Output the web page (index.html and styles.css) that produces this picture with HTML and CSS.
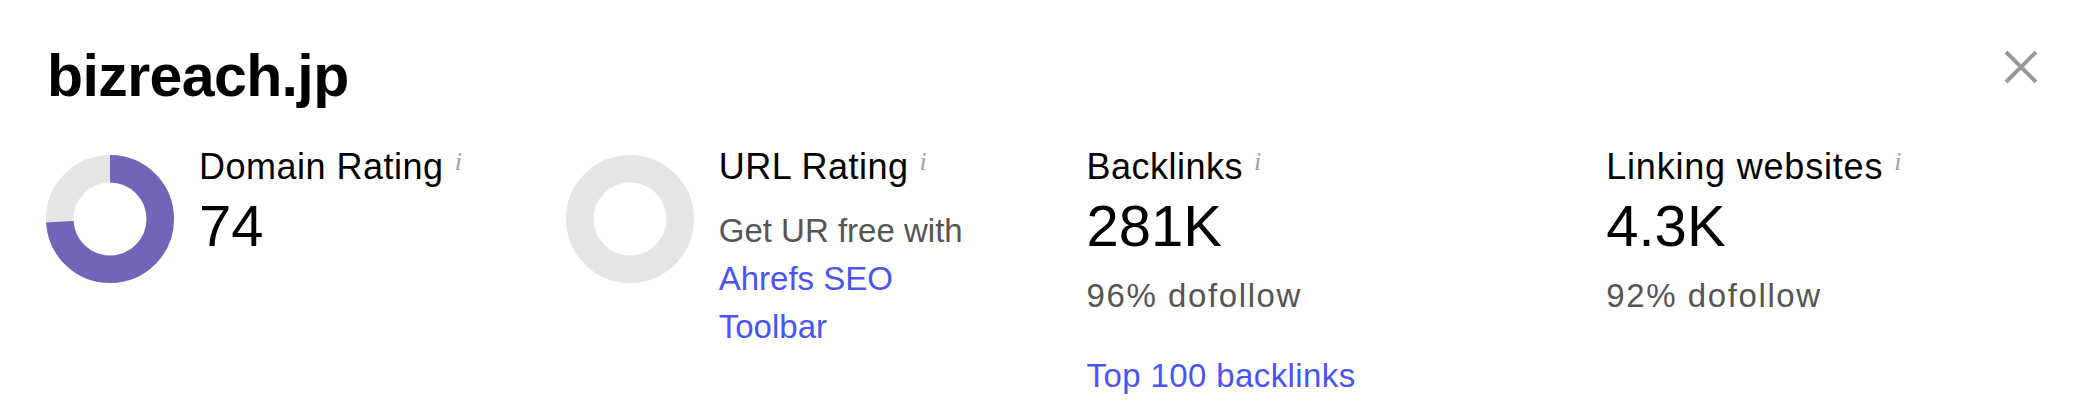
FILE: index.html
```html
<!DOCTYPE html>
<html lang="en">
<head>
<meta charset="utf-8">
<title>bizreach.jp</title>
<link rel="stylesheet" href="styles.css">
</head>
<body>
<div class="panel">
  <div class="header">
    <h1 class="title">bizreach.jp</h1>
    <button class="close" aria-label="Close">
      <svg width="34" height="34" viewBox="0 0 34 34"><path d="M2 2 L32 32 M32 2 L2 32" stroke="#999" stroke-width="4" fill="none"/></svg>
    </button>
  </div>
  <div class="stats">
    <div class="stat with-chart">
      <svg class="donut" width="128" height="128" viewBox="0 0 128 128">
        <circle cx="64" cy="64" r="50.25" fill="none" stroke="#e5e5e5" stroke-width="27.5"/>
        <circle cx="64" cy="64" r="50.25" fill="none" stroke="#7363b9" stroke-width="27.5" stroke-dasharray="233.6 400" transform="rotate(-90 64 64)"/>
      </svg>
      <div class="body">
        <div class="label">Domain Rating<span class="info">i</span></div>
        <div class="value">74</div>
      </div>
    </div>
    <div class="stat with-chart">
      <svg class="donut" width="128" height="128" viewBox="0 0 128 128">
        <circle cx="64" cy="64" r="50.25" fill="none" stroke="#e5e5e5" stroke-width="27.5"/>
      </svg>
      <div class="body">
        <div class="label">URL Rating<span class="info">i</span></div>
        <div class="promo">Get UR free with <a href="#" class="link">Ahrefs SEO Toolbar</a></div>
      </div>
    </div>
    <div class="stat">
      <div class="body">
        <div class="label">Backlinks<span class="info">i</span></div>
        <div class="value">281K</div>
        <div class="sub">96% dofollow</div>
        <a href="#" class="link top">Top 100 backlinks</a>
      </div>
    </div>
    <div class="stat">
      <div class="body">
        <div class="label wide">Linking websites<span class="info">i</span></div>
        <div class="value">4.3K</div>
        <div class="sub">92% dofollow</div>
      </div>
    </div>
  </div>
</div>
</body>
</html>
```
FILE: styles.css
```css
html, body {
  margin: 0;
  padding: 0;
  background: #ffffff;
}

body {
  font-family: "Liberation Sans", Arial, sans-serif;
  color: #000;
}

.panel {
  padding: 47px 52px 0 47px;
}

.header {
  display: flex;
  justify-content: space-between;
  align-items: flex-start;
}

.title {
  margin: 0;
  font-size: 59px;
  line-height: 59px;
  font-weight: 700;
  letter-spacing: -0.6px;
}

.close {
  margin: 3px 0 0 0;
  padding: 0;
  border: 0;
  background: none;
  width: 34px;
  height: 34px;
  display: block;
}

.close svg {
  display: block;
}

.stats {
  display: grid;
  grid-template-columns: repeat(4, 1fr);
  column-gap: 88px;
  margin-top: 38px;
}

.stat {
  display: flex;
  align-items: flex-start;
  gap: 25px;
}

.donut {
  flex: none;
  display: block;
  margin-top: 11px;
  margin-left: -1px;
}

.body {
  display: flex;
  flex-direction: column;
  align-items: flex-start;
}

.label {
  font-size: 36px;
  line-height: 36px;
  color: #000;
  white-space: nowrap;
  letter-spacing: 0.5px;
}

.label.wide {
  letter-spacing: 0.8px;
}

.info {
  font-family: "Liberation Serif", serif;
  font-style: italic;
  font-size: 26px;
  color: #a0a0a0;
  margin-left: 11px;
  vertical-align: 9px;
  letter-spacing: 0;
}

.value {
  font-size: 58px;
  line-height: 58px;
  margin-top: 12px;
}

.sub {
  font-size: 33px;
  line-height: 48px;
  color: #555;
  margin-top: 17px;
  letter-spacing: 1.6px;
}

.promo {
  font-size: 33px;
  line-height: 48px;
  color: #555;
  margin-top: 22px;
  width: 260px;
}

.link {
  color: #4a55f0;
  text-decoration: none;
}

.top {
  font-size: 33px;
  line-height: 48px;
  margin-top: 32px;
  letter-spacing: 0.4px;
}
```
